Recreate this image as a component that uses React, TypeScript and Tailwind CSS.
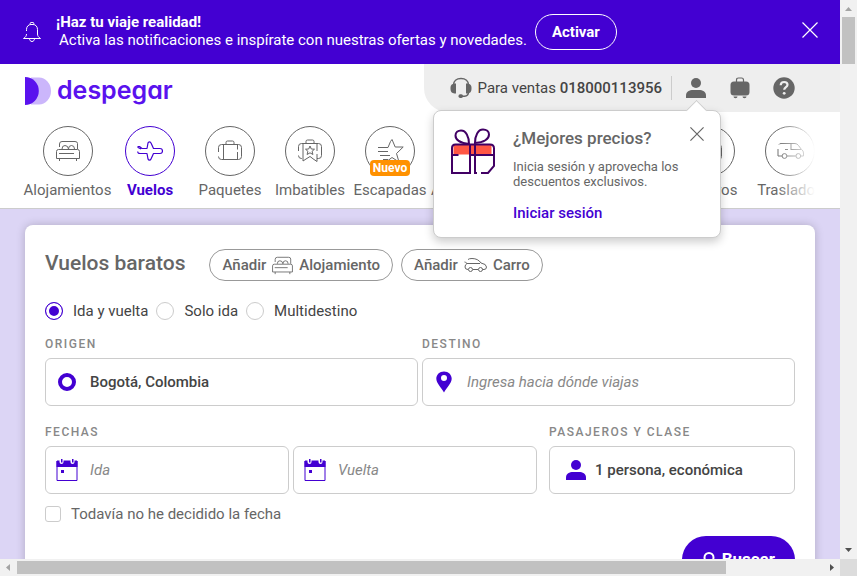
import type { ReactNode } from "react";

type IconProps = { className?: string };

const BellIcon = () => (
  <svg className="size-6" viewBox="0 0 24 24" fill="none" stroke="currentColor" strokeWidth="1">
    <path d="M10.2 4.500V3.400q0-.9.9-.9h1.800q.9 0 .9.9v1.100M6.500 11V9.500c0-3 2-5 4.500-5h2c2.500 0 4.500 2 4.500 5V14c0 2 1 3.200 3 4.500H3.500c2-1.300 3-2.500 3-4.500M9.500 18.500c0 1.700 1 3 2.500 3s2.500-1.300 2.500-3" />
  </svg>
);

const CloseIcon = ({ className }: IconProps) => (
  <svg className={className} viewBox="0 0 16 16" fill="none" stroke="currentColor" strokeWidth="1.200">
    <path d="M.5.5l15 15M15.500.5l-15 15" vectorEffect="non-scaling-stroke" />
  </svg>
);

const LogoMark = () => (
  <svg className="h-7 w-[26px]" viewBox="0 0 26 28">
    <path d="M6 .5h7a13.200 13.500 0 010 27H6z" fill="none" />
    <path d="M6 .5h8a12 13.500 0 0112 13.500 12 13.500 0 01-12 13.500H6z" fill="#cbb6fb" />
    <path d="M0 0a13.800 14 0 010 28z" fill="#5a12ee" />
  </svg>
);

const HeadsetIcon = () => (
  <svg className="size-[22px]" viewBox="0 0 22 22">
    <path d="M3.500 8C3.500 4 6.500 1.500 11 1.500S18.500 4 18.500 8M18.500 15c0 2.500-1.500 4-4 4.200H12" fill="none" stroke="#666" strokeWidth="1.500" />
    <path d="M6 6.500v10H4.500Q.5 16 .5 12v-1.500Q.5 7 4.500 6.500zM16 6.500v10h1.500q4-.5 4-4.500v-1.500q0-3.500-4-4z" fill="#666" />
    <rect x="8.500" y="17.300" width="4.500" height="3.700" rx="1.700" fill="#666" />
  </svg>
);

const PersonIcon = ({ className }: IconProps) => (
  <svg className={className} viewBox="0 0 20 20" fill="currentColor">
    <circle cx="10" cy="5" r="5" />
    <path d="M0 20v-2.500C0 13.500 3.500 12 7 12h6c3.500 0 7 1.500 7 5.500V20z" />
  </svg>
);

const LuggageIcon = () => (
  <svg className="h-[22px] w-5" viewBox="0 0 20 22">
    <path d="M6.500 5V3q0-2 2-2h3q2 0 2 2v2" fill="none" stroke="#666" strokeWidth="1.200" />
    <rect x=".5" y="4.500" width="19" height="14" rx="3.500" fill="#666" />
    <path d="M3.500 19.500h4a2 1.800 0 01-4 0zM12.500 19.500h4a2 1.800 0 01-4 0z" fill="#666" />
  </svg>
);

const HelpIcon = () => (
  <svg className="size-[22px]" viewBox="0 0 22 22">
    <circle cx="11" cy="11" r="10.700" fill="#666" />
    <path d="M7.700 8.300C7.800 6 9.200 5 11.100 5c2 0 3.400 1.100 3.400 2.800 0 2.300-3.300 2.400-3.300 5" fill="none" stroke="#eee" strokeWidth="2.200" />
    <circle cx="11.200" cy="16.300" r="1.400" fill="#eee" />
  </svg>
);

const GiftIcon = () => (
  <svg className="size-[46px] shrink-0" viewBox="0 0 46 46" fill="none" stroke="#410064" strokeWidth="2">
    <path d="M3.500 17h38v9.500h-38z" fill="#ff5644" stroke="none" />
    <path d="M19 16C10 15 5.500 12 5.500 7.500 5.500 4.500 8 2.500 11 2.500c5 0 8 6 8 13.500zM25 15c0-7.500 3-13.500 8-13.500 3.500 0 6 2 6 5 0 4.500-5 8-14 8.500z" />
    <path d="M8.500 27H2V20q0-3.500 3.500-3.500H40q4 0 4 4V27H20M20 16.500V45H2V27M25 16.500V45h2M44 27v11l-6 7h-7" />
  </svg>
);

const BedIcon = ({ className }: IconProps) => (
  <svg className={className} viewBox="0 0 24 22" fill="none" stroke="currentColor">
    <path d="M3.500 7V4q0-2.500 2.500-2.500h13Q21.500 1.500 21.500 3.500V9M.5 18.500v-7q0-2 2-2h19q2 0 2 2v7zM3 13.500h15M3.500 18.500V21M20.500 18.500V21M6 9q0-3.500 3-3.500t3.500 3.500q0-3.500 3-3.500t3 3.500" />
  </svg>
);

const PlaneIcon = () => (
  <svg className="h-5 w-[26px]" viewBox="0 0 26 20" fill="none" stroke="currentColor" strokeWidth="1.200" strokeLinejoin="round">
    <path d="M4 8L1 6.500V5.500h1.500L5 7.500h5L11 2q.3-1.200 1.500-1.200T14 2l2.500 5.500h6.500q2.500 0 2.500 2.500t-2.500 2.500h-6.500L14 18q-.5 1.200-1.500 1.200T11 18l-1-5.500H3Q.7 12.500.7 10.500" />
  </svg>
);

const SuitcaseIcon = () => (
  <svg className="h-[22px] w-[26px]" viewBox="0 0 26 22" fill="none" stroke="currentColor">
    <path d="M9 4V2.500Q9 1 10.500 1h5Q17 1 17 2.500V4M1.500 12V7.500q0-3 3-3h17q3 0 3 3v9q0 3-3 3h-17q-3 0-3-3M6.500 4.500v15M20.500 4.500v5M20.500 12v7.500" />
  </svg>
);

const DealIcon = () => (
  <svg className="h-6 w-[26px]" viewBox="0 0 26 24" fill="none" stroke="currentColor">
    <path d="M9 4V2.500Q9 1 10.500 1h5Q17 1 17 2.500V4M1.500 12V7.500q0-3 3-3h17q3 0 3 3v9q0 3-3 3h-1.500M5 19.500h-.5q-3 0-3-3M6 4.500V22l3-2 4-2.500 4 3 3 2V15M20 4.500V12" />
    <path d="M13 7l1.300 3 3.200.2-2.400 2.100.8 3.200-2.900-1.700-2.900 1.700.8-3.200-2.400-2.100 3.200-.2z" />
  </svg>
);

const StarIcon = () => (
  <svg className="h-6 w-[27px]" viewBox="0 0 27 24" fill="none" stroke="currentColor">
    <path d="M1 8.500h10l2.500-6 1.500-2 3.200 7.500h8l-6.700 6.500 2.500 8.500-7-4.500-6 4.500M1 12.500h10M3 16.500h10M6 20.500h5" />
  </svg>
);

const CarIcon = () => (
  <svg className="h-[14px] w-[23px]" viewBox="0 0 23 14" fill="none" stroke="currentColor">
    <path d="M4 1.500q1-1 4-1 6 0 9 4.500 5.500 1 5.500 4 0 2.500-2.500 2.500h-1.500M14 11.500H9M4 11.500q-3 0-3-2.500t2-3.500Q1.500 4 .5 4M3 5.500h13" />
    <circle cx="6.500" cy="11.500" r="2" />
    <circle cx="16.500" cy="11.500" r="2" />
  </svg>
);

const VanIcon = () => (
  <svg className="h-4 w-[27px]" viewBox="0 0 27 16" fill="none" stroke="currentColor">
    <path d="M2 1.500q.5-1 2-1h14q2 0 3.500 2l3 4q2 1 2 3.500v3H24M18.500 13H10M5 13H1V6M14 .5V7M8 6.500h3M14 6.500h10" />
    <circle cx="7.500" cy="13" r="2.400" />
    <circle cx="21.300" cy="13" r="2.400" />
  </svg>
);

const PinIcon = () => (
  <svg className="h-[22px] w-4" viewBox="0 0 16 22">
    <path fillRule="evenodd" d="M8 .5C3.500.5.300 3.700.300 7.700.300 12 5 16 8 21.500 11 16 15.700 12 15.700 7.700 15.700 3.700 12.500.5 8 .5zm0 3.500a3 3 0 110 6 3 3 0 010-6z" fill="#4300d2" />
  </svg>
);

const CalendarIcon = () => (
  <svg className="size-[22px]" viewBox="0 0 22 22">
    <path d="M1 2h20v19.500H1z" fill="#fff" stroke="#4300d2" />
    <path d="M.5 2h21v6H.5z" fill="#4300d2" />
    <path d="M3.500 0v3q0 2 2 2t2-2V0M14.500 0v3q0 2 2 2t2-2V0" fill="#fff" />
    <path d="M5 0h1.500v3.500H5zM16 0h1.500v3.500H16zM5 11h3v3H5z" fill="#4300d2" />
  </svg>
);

const SearchIcon = () => (
  <svg className="size-4" viewBox="0 0 16 16" fill="none" stroke="currentColor" strokeWidth="2">
    <circle cx="7" cy="5.500" r="4.500" />
    <path d="M4 9l-3 6" />
  </svg>
);

const products: { label: string; icon: ReactNode; active?: boolean; badge?: string }[] = [
  { label: "Alojamientos", icon: <BedIcon className="h-[22px] w-6" /> },
  { label: "Vuelos", icon: <PlaneIcon />, active: true },
  { label: "Paquetes", icon: <SuitcaseIcon /> },
  { label: "Imbatibles", icon: <DealIcon /> },
  { label: "Escapadas", icon: <StarIcon />, badge: "Nuevo" },
  { label: "Actividades", icon: <StarIcon /> },
  { label: "Carros", icon: <CarIcon /> },
  { label: "Circuitos", icon: <SuitcaseIcon /> },
  { label: "Seguros", icon: <SuitcaseIcon /> },
  { label: "Traslados", icon: <VanIcon /> },
];

function NotificationBanner() {
  return (
    <div className="flex h-16 items-center bg-[#4300d2] pr-[22px] pl-5 text-white">
      <BellIcon />
      <div className="ml-3 pb-[2px] text-[15px] leading-[18px]">
        <p className="font-bold">¡Haz tu viaje realidad!</p>
        <p className="pl-[3px]">Activa las notificaciones e inspírate con nuestras ofertas y novedades.</p>
      </div>
      <button className="ml-2 h-9 w-[82px] shrink-0 rounded-full border border-white text-[15px] font-bold">Activar</button>
      <button aria-label="Cerrar" className="ml-auto pb-1">
        <CloseIcon className="size-4" />
      </button>
    </div>
  );
}

function LoginPopup() {
  return (
    <div className="absolute top-8 -right-[15px] z-20 flex h-32 w-72 rounded-lg border border-[#ccc] bg-white px-4 pt-[17px] text-[#666] shadow-[0_4px_10px_rgba(0,0,0,0.2)]">
      <span className="absolute -top-[8px] right-[16px] size-[15px] rotate-45 border-t border-l border-[#ccc] bg-white" />
      <GiftIcon />
      <div className="ml-[17px] flex-1">
        <h2 className="text-[17px] leading-5 font-medium">¿Mejores precios?</h2>
        <p className="mt-[11px] text-[13px] leading-[15px]">Inicia sesión y aprovecha los descuentos exclusivos.</p>
        <a href="#login" className="mt-[14px] block text-[15px] leading-5 font-medium text-[#4300d2]">Iniciar sesión</a>
      </div>
      <button aria-label="Cerrar aviso" className="absolute top-4 right-4">
        <CloseIcon className="size-[14px]" />
      </button>
    </div>
  );
}

function Header() {
  return (
    <header className="border-b border-[#ccc] bg-white">
      <div className="flex items-start justify-between pl-[25px]">
        <a href="#inicio" className="mt-[13px] flex h-7 items-center gap-[6px]">
          <LogoMark />
          <span className="pb-[2px] font-['Inter',sans-serif] text-[25px] leading-7 font-semibold text-[#5a12ee] [font-feature-settings:'cv11']">despegar</span>
        </a>
        <div className="flex h-12 items-center rounded-bl-[24px] bg-[#eee] pr-[45px] pl-[26px] text-[15px] text-[#444]">
          <HeadsetIcon />
          <p className="ml-[6px]">
            Para ventas <a href="tel:018000113956" className="font-medium">018000113956</a>
          </p>
          <span className="mr-[14px] ml-[9px] h-6 w-px bg-[#ccc]" />
          <div className="relative h-5 text-[#666]">
            <button aria-label="Mi cuenta" className="block">
              <PersonIcon className="size-5" />
            </button>
            <LoginPopup />
          </div>
          <button aria-label="Mis viajes" className="ml-6">
            <LuggageIcon />
          </button>
          <button aria-label="Ayuda" className="ml-[23px]">
            <HelpIcon />
          </button>
        </div>
      </div>
      <nav className="relative mr-[25px] overflow-hidden pt-[14px] pb-2 pl-[25px]">
        <ul className="flex">
          {products.map((product) => (
            <li key={product.label} className="w-20 shrink-0 first:w-[85px]">
              <a
                href="#productos"
                className={
                  product.active
                    ? "flex flex-col items-center text-[15px] font-bold text-[#4300d2]"
                    : "flex flex-col items-center text-[15px] text-[#666]"
                }
              >
                <span className="relative flex size-[50px] items-center justify-center rounded-full border border-current">
                  {product.icon}
                  {product.badge && (
                    <span className="absolute -bottom-px rounded bg-[#ff9100] px-[3px] text-xs leading-4 font-bold text-white">{product.badge}</span>
                  )}
                </span>
                <span className="mt-1 leading-5">{product.label}</span>
              </a>
            </li>
          ))}
        </ul>
        <span className="absolute inset-y-0 right-0 w-10 bg-linear-to-r from-transparent to-white" />
      </nav>
    </header>
  );
}

type FieldProps = { id: string; icon: ReactNode; value?: string; placeholder?: string; label?: string; className?: string };

function Field({ id, icon, value, placeholder, label, className = "gap-3 pl-[10px]" }: FieldProps) {
  return (
    <div className={`flex h-12 min-w-0 flex-1 items-center rounded-md border border-[#ccc] pr-3 ${className}`}>
      <span className="flex w-[22px] shrink-0 justify-center">{icon}</span>
      <input
        id={id}
        aria-label={label}
        defaultValue={value}
        placeholder={placeholder}
        className="min-w-0 flex-1 text-[15px] font-medium text-[#444] outline-none placeholder:font-normal placeholder:text-[#888] placeholder:italic"
      />
    </div>
  );
}

function FieldLabel({ htmlFor, children }: { htmlFor: string; children: ReactNode }) {
  return (
    <label htmlFor={htmlFor} className="mb-[6px] block text-xs leading-4 font-medium tracking-[1.5px] text-[#888] uppercase">
      {children}
    </label>
  );
}

function TripOption({ label, checked }: { label: string; checked?: boolean }) {
  return (
    <label className="flex items-center gap-[10px]">
      <input
        type="radio"
        name="trip"
        defaultChecked={checked}
        className="size-[18px] appearance-none rounded-full border border-[#ccc] checked:border-[#4300d2] checked:bg-[#4300d2] checked:shadow-[inset_0_0_0_3px_white]"
      />
      {label}
    </label>
  );
}

function SearchCard() {
  return (
    <form className="mx-[25px] rounded-lg bg-white px-5 pt-6 pb-5 shadow-[0_0_10px_rgba(0,0,0,0.2)]">
      <div className="flex items-center text-[15px] font-medium text-[#666]">
        <h1 className="mr-6 pb-1 text-[21px] leading-7">Vuelos baratos</h1>
        <button type="button" className="flex h-8 items-center gap-[6px] rounded-full border border-[#999] px-3">
          Añadir <BedIcon className="h-[19px] w-[21px]" /> Alojamiento
        </button>
        <button type="button" className="ml-2 flex h-8 items-center gap-[6px] rounded-full border border-[#999] px-3">
          Añadir <CarIcon /> Carro
        </button>
      </div>
      <div className="mt-5 flex gap-2 text-[15px] leading-5 text-[#444]">
        <TripOption label="Ida y vuelta" checked />
        <TripOption label="Solo ida" />
        <TripOption label="Multidestino" />
      </div>
      <div className="mt-[15px] flex gap-1">
        <div className="flex-1">
          <FieldLabel htmlFor="origin">Origen</FieldLabel>
          <div className="flex">
            <Field id="origin" icon={<span className="size-[18px] rounded-full border-4 border-[#4300d2]" />} value="Bogotá, Colombia" />
          </div>
        </div>
        <div className="flex-1">
          <FieldLabel htmlFor="destination">Destino</FieldLabel>
          <div className="flex">
            <Field id="destination" icon={<PinIcon />} placeholder="Ingresa hacia dónde viajas" />
          </div>
        </div>
      </div>
      <div className="mt-[18px] grid grid-cols-[minmax(0,2fr)_minmax(0,1fr)] gap-3">
        <div>
          <FieldLabel htmlFor="departure">Fechas</FieldLabel>
          <div className="flex gap-1">
            <Field id="departure" icon={<CalendarIcon />} placeholder="Ida" />
            <Field id="return" label="Vuelta" icon={<CalendarIcon />} placeholder="Vuelta" />
          </div>
        </div>
        <div>
          <FieldLabel htmlFor="passengers">Pasajeros y clase</FieldLabel>
          <div className="flex">
            <Field id="passengers" className="gap-2 pl-[15px]" icon={<PersonIcon className="size-5 text-[#4300d2]" />} value="1 persona, económica" />
          </div>
        </div>
      </div>
      <label className="mt-[10px] flex w-fit items-center gap-[10px] text-[15px] leading-5 text-[#666]">
        <input type="checkbox" className="size-4 appearance-none rounded-[3px] border border-[#ccc] checked:bg-[#4300d2]" />
        Todavía no he decidido la fecha
      </label>
      <button className="mt-3 ml-auto flex h-12 items-center gap-1 rounded-full bg-[#4300d2] px-5 text-[17px] font-bold text-white">
        <SearchIcon />
        Buscar
      </button>
    </form>
  );
}

function VerticalScrollbar() {
  return (
    <div className="flex min-h-0 flex-col items-center bg-[#f1f1f1]">
      <svg className="size-[17px] shrink-0" viewBox="0 0 17 17"><path d="M5 11l3.500-4 3.500 4z" fill="#a3a3a3" /></svg>
      <div className="w-full flex-1 px-[2px]"><div className="h-[9%] bg-[#c1c1c1]" /></div>
      <svg className="size-[17px] shrink-0" viewBox="0 0 17 17"><path d="M5 6l3.500 4L12 6z" fill="#505050" /></svg>
    </div>
  );
}

function HorizontalScrollbar() {
  return (
    <div className="flex min-w-0 bg-[#f1f1f1]">
      <svg className="size-[17px] shrink-0" viewBox="0 0 17 17"><path d="M10 5L6 8.500l4 3.500z" fill="#a3a3a3" /></svg>
      <div className="h-full flex-1 py-[2px]"><div className="h-full w-[88%] bg-[#c1c1c1]" /></div>
      <svg className="size-[17px] shrink-0" viewBox="0 0 17 17"><path d="M7 5l4 3.500L7 12z" fill="#505050" /></svg>
    </div>
  );
}

export default function App() {
  return (
    <div className="grid h-screen grid-cols-[minmax(0,1fr)_17px] grid-rows-[minmax(0,1fr)_17px] bg-[#dcdcdc] font-['Roboto',sans-serif]">
      <div className="overflow-hidden bg-[#dcd5f5]">
        <NotificationBanner />
        <Header />
        <main className="py-4">
          <SearchCard />
        </main>
      </div>
      <VerticalScrollbar />
      <HorizontalScrollbar />
    </div>
  );
}
